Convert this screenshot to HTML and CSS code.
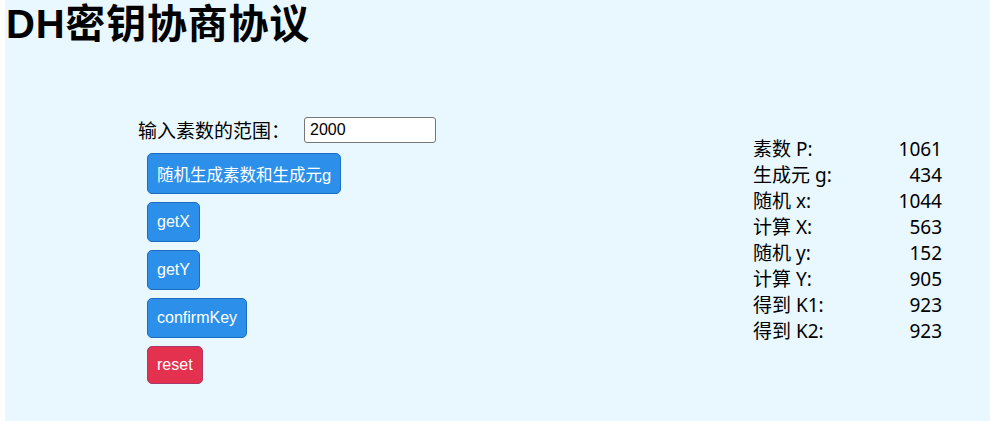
FILE: index.html
```html
<!DOCTYPE html>
<html lang="zh">
<head>
<meta charset="utf-8">
<title>DH密钥协商协议</title>
<link rel="stylesheet" href="styles.css">
</head>
<body>
<div class="page">
  <h1 class="title">DH密钥协商协议</h1>
  <div class="main">
    <div class="controls">
      <div class="range-row">
        <label class="range-label" for="range">输入素数的范围：</label>
        <input id="range" class="range-input" type="text" value="2000">
      </div>
      <div class="buttons">
        <button class="btn">随机生成素数和生成元g</button>
        <button class="btn">getX</button>
        <button class="btn">getY</button>
        <button class="btn">confirmKey</button>
        <button class="btn btn-danger">reset</button>
      </div>
    </div>
    <div class="results">
      <div class="row"><span>素数 P:</span><span>1061</span></div>
      <div class="row"><span>生成元 g:</span><span>434</span></div>
      <div class="row"><span>随机 x:</span><span>1044</span></div>
      <div class="row"><span>计算 X:</span><span>563</span></div>
      <div class="row"><span>随机 y:</span><span>152</span></div>
      <div class="row"><span>计算 Y:</span><span>905</span></div>
      <div class="row"><span>得到 K1:</span><span>923</span></div>
      <div class="row"><span>得到 K2:</span><span>923</span></div>
    </div>
  </div>
</div>
</body>
</html>
```

FILE: styles.css
```css
html, body {
  margin: 0;
  padding: 0;
  background: #ffffff;
}

body {
  font-family: "Noto Sans", "Noto Sans CJK SC", sans-serif;
  color: #000;
}

.page {
  margin-left: 5px;
  min-height: 421px;
  background: #e9f8ff;
  overflow: hidden;
}

.title {
  margin: 0;
  padding-left: 1px;
  font-family: "Liberation Sans", "Noto Sans CJK SC", sans-serif;
  font-weight: 700;
  font-size: 40px;
  line-height: 48px;
  letter-spacing: 0.8px;
}

.main {
  display: flex;
  align-items: flex-start;
  padding-left: 133px;
  padding-right: 48px;
  margin-top: 69px;
}

.controls {
  display: flex;
  flex-direction: column;
}

.range-row {
  display: flex;
  align-items: center;
  height: 26px;
}

.range-label {
  font-size: 19px;
  font-family: "Noto Sans CJK SC", sans-serif;
  margin-right: 14px;
  line-height: 26px;
}

.range-input {
  box-sizing: border-box;
  width: 132px;
  height: 26px;
  border: 1px solid #767676;
  border-radius: 3px;
  background: #fff;
  padding: 0 5px;
  font-family: "Liberation Sans", sans-serif;
  font-size: 16px;
  color: #000;
}

.buttons {
  display: flex;
  flex-direction: column;
  align-items: flex-start;
  gap: 8px;
  margin-top: 10px;
  margin-left: 9px;
}

.btn {
  box-sizing: border-box;
  height: 40px;
  padding: 0 9px;
  border: 1px solid #1d6cc0;
  border-radius: 5px;
  background: #2c90ea;
  color: #fff;
  font-family: "Liberation Sans", "Noto Sans CJK SC", sans-serif;
  font-size: 16px;
}

.buttons .btn:first-child {
  height: 41px;
  font-size: 16.5px;
}

.buttons .btn:last-child {
  height: 38px;
}

.btn-danger {
  background: #e3314f;
  border-color: #a83a6a;
}

.results {
  margin-left: auto;
  margin-top: 19px;
  width: 189px;
  font-size: 19px;
  font-family: "Noto Sans", "Noto Sans CJK SC", sans-serif;
}

.row {
  display: flex;
  justify-content: space-between;
  height: 26px;
  line-height: 26px;
}
```
